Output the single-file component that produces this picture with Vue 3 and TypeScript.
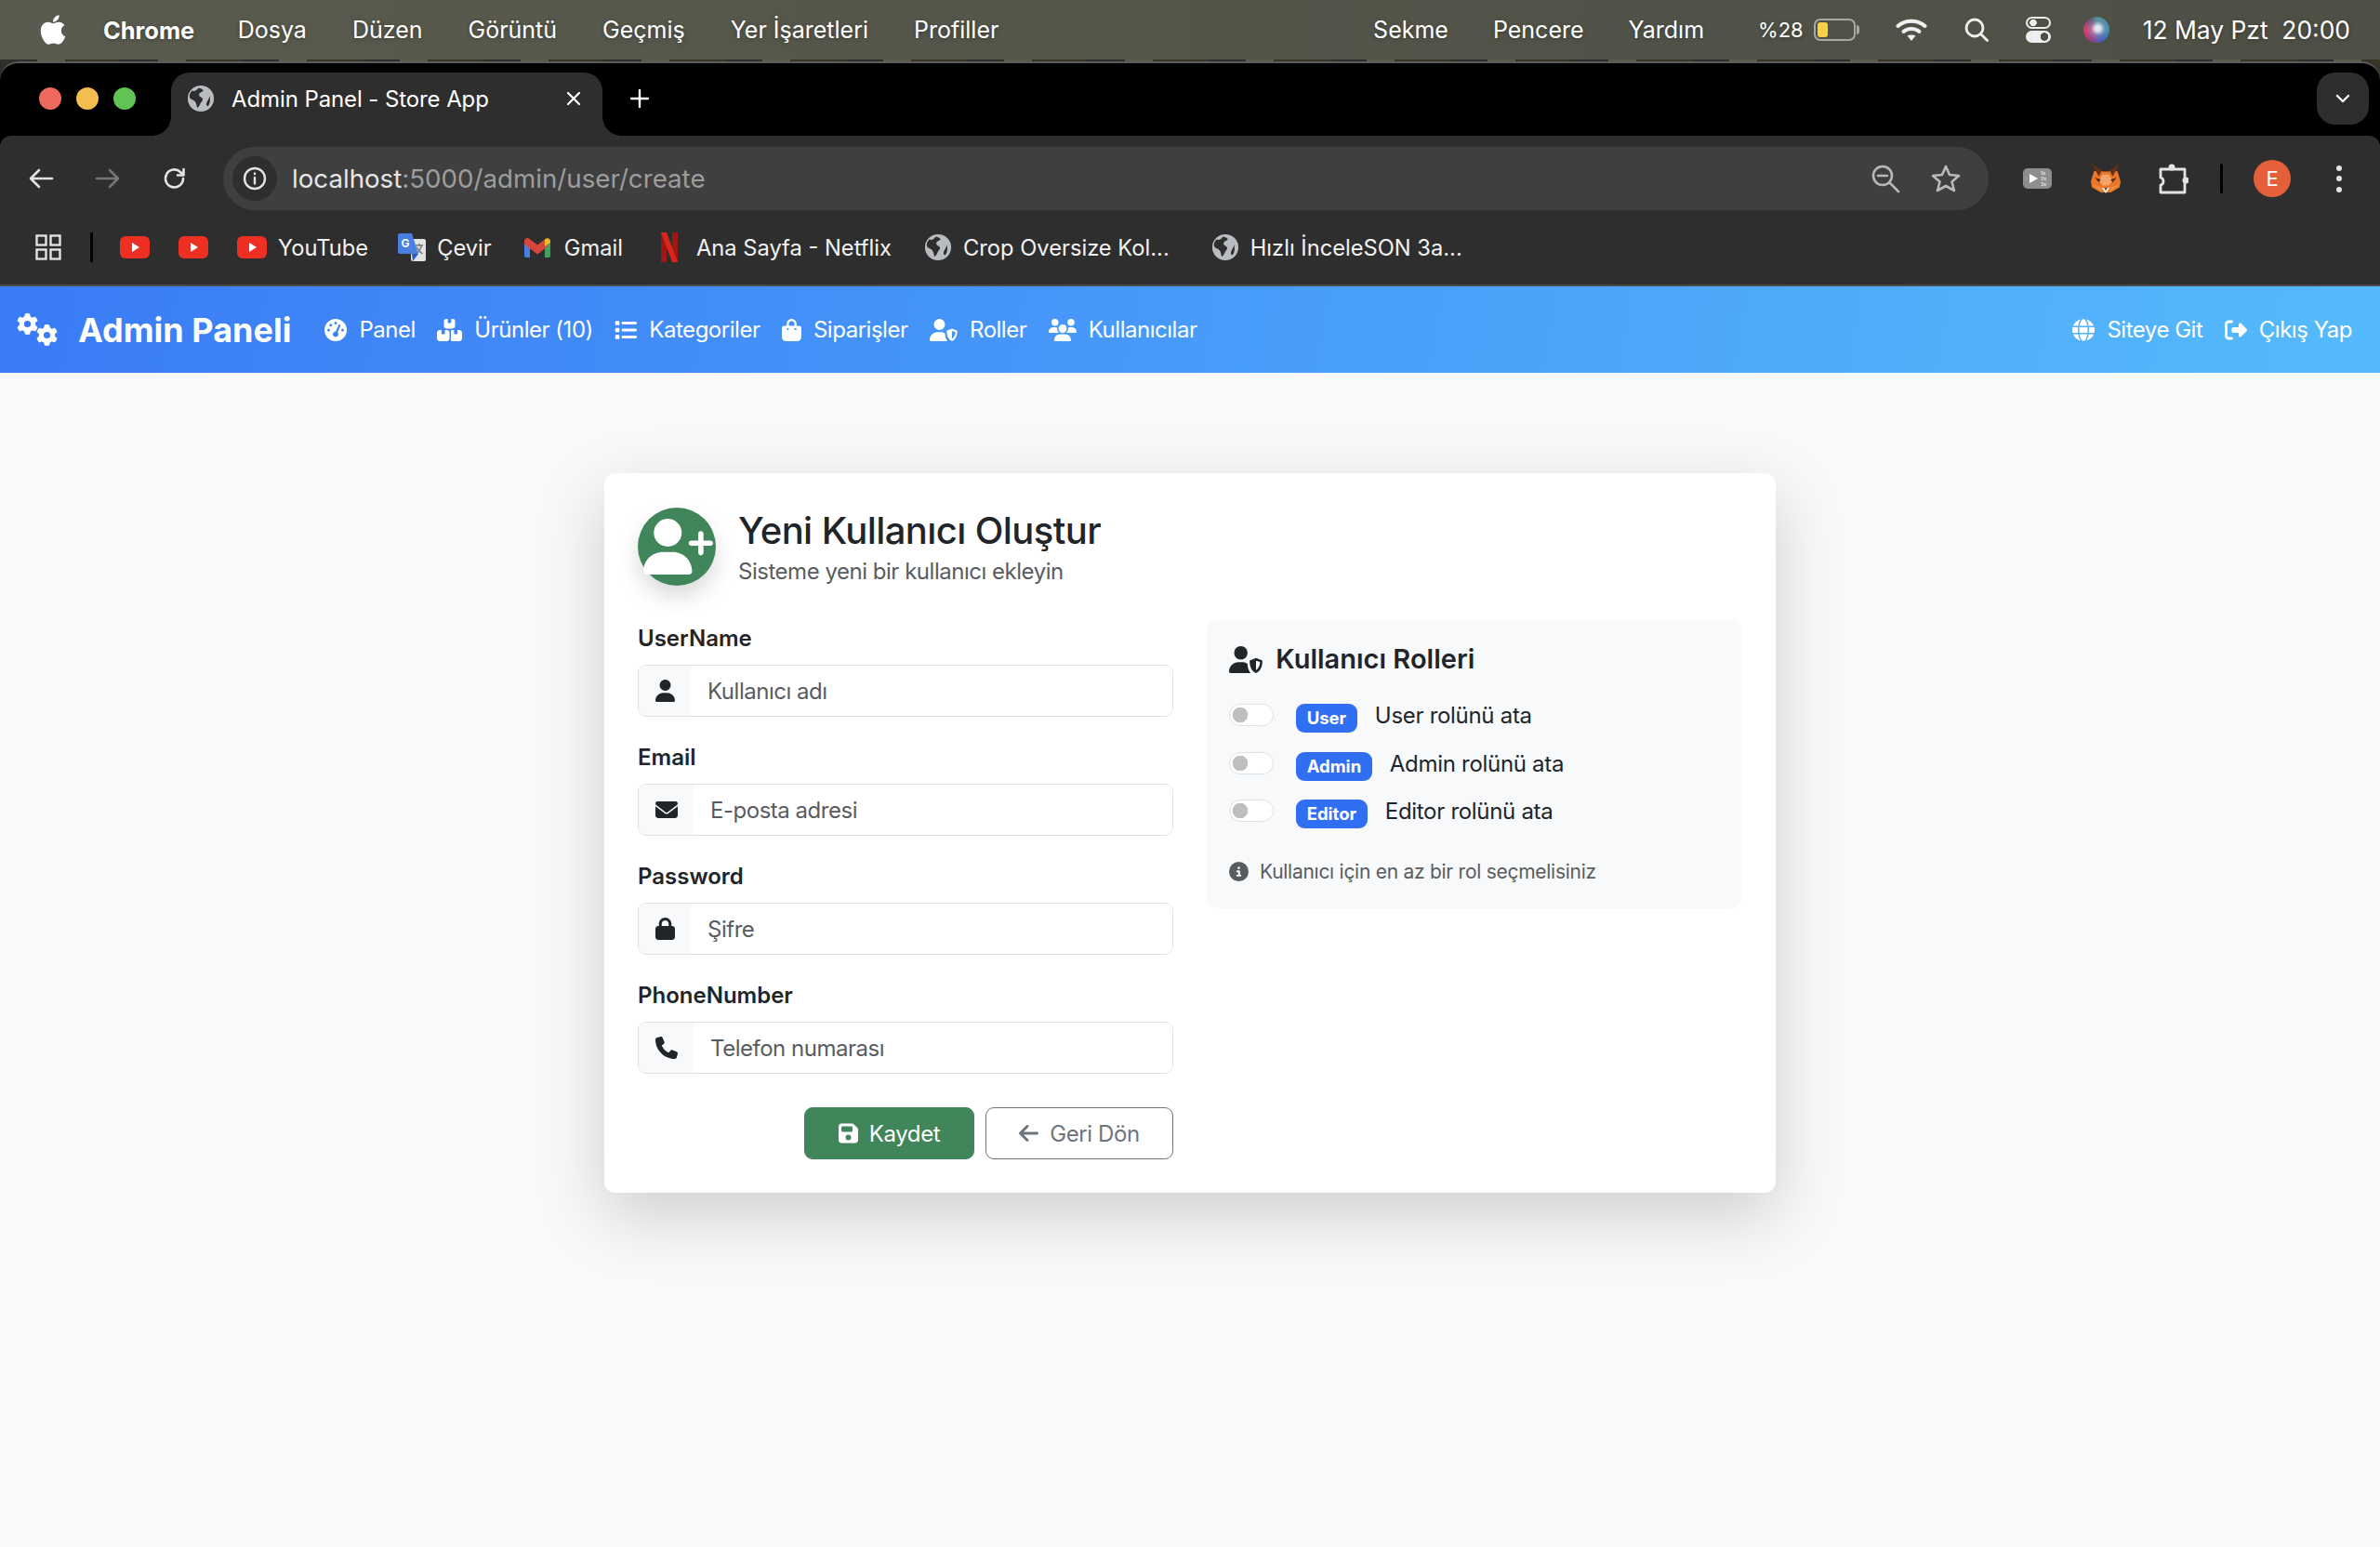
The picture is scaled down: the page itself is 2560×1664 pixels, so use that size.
<script setup lang="ts">
type Icon = { vb: string; d: string }

const icons: Record<string, Icon> = {
  gear: { vb: '0 0 512 512', d: 'M495.9 166.6c3.2 8.7 .5 18.4-6.4 24.6l-43.3 39.4c1.1 8.3 1.7 16.8 1.7 25.4s-.6 17.1-1.7 25.4l43.3 39.4c6.9 6.2 9.6 15.9 6.4 24.6c-4.4 11.9-9.7 23.3-15.8 34.3l-4.7 8.1c-6.6 11-14 21.4-22.1 31.2c-5.9 7.2-15.7 9.6-24.5 6.8l-55.7-17.7c-13.4 10.3-28.2 18.9-44 25.4l-12.5 57.1c-2 9.1-9 16.3-18.2 17.8c-13.8 2.3-28 3.5-42.5 3.5s-28.7-1.2-42.5-3.5c-9.2-1.5-16.2-8.7-18.2-17.8l-12.5-57.1c-15.8-6.5-30.6-15.1-44-25.4L83.1 425.9c-8.8 2.8-18.6 .3-24.5-6.8c-8.1-9.8-15.5-20.2-22.1-31.2l-4.7-8.1c-6.1-11-11.4-22.4-15.8-34.3c-3.2-8.7-.5-18.4 6.4-24.6l43.3-39.4C64.6 273.1 64 264.6 64 256s.6-17.1 1.7-25.4L22.4 191.2c-6.9-6.2-9.6-15.9-6.4-24.6c4.4-11.9 9.7-23.3 15.8-34.3l4.7-8.1c6.6-11 14-21.4 22.1-31.2c5.9-7.2 15.7-9.6 24.5-6.8l55.7 17.7c13.4-10.3 28.2-18.9 44-25.4l12.5-57.1c2-9.1 9-16.3 18.2-17.8C227.3 1.2 241.5 0 256 0s28.7 1.2 42.5 3.5c9.2 1.5 16.2 8.7 18.2 17.8l12.5 57.1c15.8 6.5 30.6 15.1 44 25.4l55.7-17.7c8.8-2.8 18.6-.3 24.5 6.8c8.1 9.8 15.5 20.2 22.1 31.2l4.7 8.1c6.1 11 11.4 22.4 15.8 34.3zM256 336a80 80 0 1 0 0-160 80 80 0 1 0 0 160z' },
  gauge: { vb: '0 0 512 512', d: 'M0 256a256 256 0 1 1 512 0A256 256 0 1 1 0 256zM288 96a32 32 0 1 0 -64 0 32 32 0 1 0 64 0zM256 416c35.3 0 64-28.7 64-64c0-17.4-6.9-33.1-18.1-44.6L366 161.7c5.3-12.1-.2-26.3-12.3-31.6s-26.3 .2-31.6 12.3L257.9 288c-.6 0-1.3 0-1.9 0c-35.3 0-64 28.7-64 64s28.7 64 64 64zM176 144a32 32 0 1 0 -64 0 32 32 0 1 0 64 0zM96 288a32 32 0 1 0 0-64 32 32 0 1 0 0 64zm352-32a32 32 0 1 0 -64 0 32 32 0 1 0 64 0z' },
  boxes: { vb: '0 0 576 512', d: 'M248 0H208c-26.5 0-48 21.5-48 48V160c0 35.3 28.7 64 64 64H352c35.3 0 64-28.7 64-64V48c0-26.5-21.5-48-48-48H328V80c0 8.8-7.2 16-16 16H264c-8.8 0-16-7.2-16-16V0zM64 256c-35.3 0-64 28.7-64 64V448c0 35.3 28.7 64 64 64H224c35.3 0 64-28.7 64-64V320c0-35.3-28.7-64-64-64H184v80c0 8.8-7.2 16-16 16H120c-8.8 0-16-7.2-16-16V256H64zM352 512H512c35.3 0 64-28.7 64-64V320c0-35.3-28.7-64-64-64H472v80c0 8.8-7.2 16-16 16H408c-8.8 0-16-7.2-16-16V256H352c-15 0-28.8 5.1-39.7 13.8c4.9 10.4 7.7 22 7.7 34.2V464c0 12.2-2.8 23.8-7.7 34.2C323.2 506.9 337 512 352 512z' },
  list: { vb: '0 0 512 512', d: 'M40 48C26.7 48 16 58.7 16 72v48c0 13.3 10.7 24 24 24H88c13.3 0 24-10.7 24-24V72c0-13.3-10.7-24-24-24H40zM192 64c-17.7 0-32 14.3-32 32s14.3 32 32 32H480c17.7 0 32-14.3 32-32s-14.3-32-32-32H192zm0 160c-17.7 0-32 14.3-32 32s14.3 32 32 32H480c17.7 0 32-14.3 32-32s-14.3-32-32-32H192zm0 160c-17.7 0-32 14.3-32 32s14.3 32 32 32H480c17.7 0 32-14.3 32-32s-14.3-32-32-32H192zM16 232v48c0 13.3 10.7 24 24 24H88c13.3 0 24-10.7 24-24V232c0-13.3-10.7-24-24-24H40c-13.3 0-24 10.7-24 24zM40 368c-13.3 0-24 10.7-24 24v48c0 13.3 10.7 24 24 24H88c13.3 0 24-10.7 24-24V392c0-13.3-10.7-24-24-24H40z' },
  bag: { vb: '0 0 448 512', d: 'M160 112c0-35.3 28.7-64 64-64s64 28.7 64 64v48H160V112zm-48 48H48c-26.5 0-48 21.5-48 48V416c0 53 43 96 96 96H352c53 0 96-43 96-96V208c0-26.5-21.5-48-48-48H336V112C336 50.1 285.9 0 224 0S112 50.1 112 112v48zm24 48a24 24 0 1 1 0 48 24 24 0 1 1 0-48zm152 24a24 24 0 1 1 48 0 24 24 0 1 1 -48 0z' },
  shield: { vb: '0 0 640 512', d: 'M224 256A128 128 0 1 0 224 0a128 128 0 1 0 0 256zm-45.7 48C79.8 304 0 383.8 0 482.3C0 498.7 13.3 512 29.7 512H408C370 460 352 400 352 338C328 318 300 304 269.7 304H178.3zM512 224L632 272C640 380 590 480 512 512C434 480 384 380 392 272zM512 276V458C562 428 590 360 590 300z' },
  users: { vb: '0 0 640 512', d: 'M144 0a80 80 0 1 1 0 160A80 80 0 1 1 144 0zM512 0a80 80 0 1 1 0 160A80 80 0 1 1 512 0zM0 298.7C0 239.8 47.8 192 106.7 192h42.7c15.9 0 31 3.5 44.6 9.7c-1.3 7.2-1.9 14.7-1.9 22.3c0 38.2 16.8 72.5 43.3 96c-.2 0-.4 0-.7 0H21.3C9.6 320 0 310.4 0 298.7zM405.3 320c-.2 0-.4 0-.7 0c26.6-23.5 43.3-57.8 43.3-96c0-7.6-.7-15-1.9-22.3c13.6-6.3 28.7-9.7 44.6-9.7h42.7C592.2 192 640 239.8 640 298.7c0 11.8-9.6 21.3-21.3 21.3H405.3zM224 224a96 96 0 1 1 192 0 96 96 0 1 1 -192 0zM128 485.3C128 411.7 187.7 352 261.3 352H378.7C452.3 352 512 411.7 512 485.3c0 14.7-11.9 26.7-26.7 26.7H154.7c-14.7 0-26.7-11.9-26.7-26.7z' },
  globe: { vb: '0 0 512 512', d: 'M352 256c0 22.2-1.2 43.6-3.3 64H163.3c-2.2-20.4-3.3-41.8-3.3-64s1.2-43.6 3.3-64H348.7c2.2 20.4 3.3 41.8 3.3 64zm28.8-64H503.9c5.3 20.5 8.1 41.9 8.1 64s-2.8 43.5-8.1 64H380.8c2.1-20.6 3.2-42 3.2-64s-1.1-43.4-3.2-64zm112.6-32H376.7c-10-63.9-29.8-117.4-55.3-151.6c78.3 20.7 142 77.5 171.9 151.6zm-149.1 0H167.7c6.1-36.4 15.5-68.6 27-94.7c10.5-23.6 22.2-40.7 33.5-51.5C239.4 3.2 248.7 0 256 0s16.6 3.2 27.8 13.8c11.3 10.8 23 27.9 33.5 51.5c11.6 26 20.9 58.2 27 94.7zm-209 0H18.6C48.6 85.9 112.2 29.1 190.6 8.4C165.1 42.6 145.3 96.1 135.3 160zM8.1 192H131.2c-2.1 20.6-3.2 42-3.2 64s1.1 43.4 3.2 64H8.1C2.8 299.5 0 278.1 0 256s2.8-43.5 8.1-64zM194.7 446.6c-11.6-26-20.9-58.2-27-94.6H344.3c-6.1 36.4-15.5 68.6-27 94.6c-10.5 23.6-22.2 40.7-33.5 51.5C272.6 508.8 263.3 512 256 512s-16.6-3.2-27.8-13.8c-11.3-10.8-23-27.9-33.5-51.5zM135.3 352c10 63.9 29.8 117.4 55.3 151.6C112.2 482.9 48.6 426.1 18.6 352H135.3zm358.1 0c-30 74.1-93.6 130.9-171.9 151.6c25.5-34.2 45.2-87.7 55.3-151.6H493.4z' },
  logout: { vb: '0 0 512 512', d: 'M377.9 105.9L500.7 228.7c7.2 7.2 11.3 17.1 11.3 27.3s-4.1 20.1-11.3 27.3L377.9 406.1c-6.4 6.4-15 9.9-24 9.9c-18.7 0-33.9-15.2-33.9-33.9l0-62.1-128 0c-17.7 0-32-14.3-32-32l0-64c0-17.7 14.3-32 32-32l128 0 0-62.1c0-18.7 15.2-33.9 33.9-33.9c9 0 17.6 3.6 24 9.9zM160 96L96 96c-17.7 0-32 14.3-32 32l0 256c0 17.7 14.3 32 32 32l64 0c17.7 0 32 14.3 32 32s-14.3 32-32 32l-64 0c-53 0-96-43-96-96L0 128C0 75 43 32 96 32l64 0c17.7 0 32 14.3 32 32s-14.3 32-32 32z' },
  userPlus: { vb: '0 0 640 512', d: 'M96 128a128 128 0 1 1 256 0A128 128 0 1 1 96 128zM0 482.3C0 383.8 79.8 304 178.3 304h91.4C368.2 304 448 383.8 448 482.3c0 16.4-13.3 29.7-29.7 29.7H29.7C13.3 512 0 498.7 0 482.3zM504 312V248H440c-13.3 0-24-10.7-24-24s10.7-24 24-24h64V136c0-13.3 10.7-24 24-24s24 10.7 24 24v64h64c13.3 0 24 10.7 24 24s-10.7 24-24 24H552v64c0 13.3-10.7 24-24 24s-24-10.7-24-24z' },
  user: { vb: '0 0 448 512', d: 'M224 256A128 128 0 1 0 224 0a128 128 0 1 0 0 256zm-45.7 48C79.8 304 0 383.8 0 482.3C0 498.7 13.3 512 29.7 512H418.3c16.4 0 29.7-13.3 29.7-29.7C448 383.8 368.2 304 269.7 304H178.3z' },
  envelope: { vb: '0 0 512 512', d: 'M48 64C21.5 64 0 85.5 0 112c0 15.1 7.1 29.3 19.2 38.4L236.8 313.6c11.4 8.5 27 8.5 38.4 0L492.8 150.4c12.1-9.1 19.2-23.3 19.2-38.4c0-26.5-21.5-48-48-48H48zM0 176V384c0 35.3 28.7 64 64 64H448c35.3 0 64-28.7 64-64V176L294.4 339.2c-22.8 17.1-54 17.1-76.8 0L0 176z' },
  lock: { vb: '0 0 448 512', d: 'M144 144v48H304V144c0-44.2-35.8-80-80-80s-80 35.8-80 80zM80 192V144C80 64.5 144.5 0 224 0s144 64.5 144 144v48h16c35.3 0 64 28.7 64 64V448c0 35.3-28.7 64-64 64H64c-35.3 0-64-28.7-64-64V256c0-35.3 28.7-64 64-64H80z' },
  phone: { vb: '0 0 512 512', d: 'M164.9 24.6c-7.7-18.6-28-28.5-47.4-23.2l-88 24C12.1 30.2 0 46 0 64C0 311.4 200.6 512 448 512c18 0 33.8-12.1 38.6-29.5l24-88c5.3-19.4-4.6-39.7-23.2-47.4l-96-40c-16.3-6.8-35.2-2.1-46.3 11.6L304.7 368C234.3 334.7 177.3 277.7 144 207.3L193.3 167c13.7-11.2 18.4-30 11.6-46.3l-40-96z' },
  save: { vb: '0 0 448 512', d: 'M64 32C28.7 32 0 60.7 0 96V416c0 35.3 28.7 64 64 64H384c35.3 0 64-28.7 64-64V173.3c0-17-6.7-33.3-18.7-45.3L352 50.7C340 38.7 323.7 32 306.7 32H64zm0 96c0-17.7 14.3-32 32-32H288c17.7 0 32 14.3 32 32v64c0 17.7-14.3 32-32 32H96c-17.7 0-32-14.3-32-32V128zM224 288a64 64 0 1 1 0 128 64 64 0 1 1 0-128z' },
  back: { vb: '0 0 448 512', d: 'M9.4 233.4c-12.5 12.5-12.5 32.8 0 45.3l160 160c12.5 12.5 32.8 12.5 45.3 0s12.5-32.8 0-45.3L109.2 288 416 288c17.7 0 32-14.3 32-32s-14.3-32-32-32l-306.7 0L214.6 118.6c12.5-12.5 12.5-32.8 0-45.3s-32.8-12.5-45.3 0l-160 160z' },
  info: { vb: '0 0 512 512', d: 'M256 512A256 256 0 1 0 256 0a256 256 0 1 0 0 512zM216 336h24V272H216c-13.3 0-24-10.7-24-24s10.7-24 24-24h48c13.3 0 24 10.7 24 24v88h8c13.3 0 24 10.7 24 24s-10.7 24-24 24H216c-13.3 0-24-10.7-24-24s10.7-24 24-24zm40-208a32 32 0 1 1 0 64 32 32 0 1 1 0-64z' },
  apple: { vb: '0 0 384 512', d: 'M318.7 268.7c-.2-36.7 16.4-64.4 50-84.8-18.8-26.9-47.2-41.7-84.7-44.6-35.5-2.8-74.3 20.7-88.5 20.7-15 0-49.4-19.7-76.4-19.7C63.3 141.2 4 184.8 4 273.5q0 39.3 14.4 81.2c12.8 36.7 59 126.7 107.2 125.2 25.2-.6 43-17.9 75.8-17.9 31.8 0 48.3 17.9 76.4 17.9 48.6-.7 90.4-82.5 102.6-119.3-65.2-30.7-61.7-90-61.7-91.9zm-56.6-164.2c27.3-32.4 24.8-61.9 24-72.5-24.1 1.4-52 16.4-67.9 34.9-17.5 19.8-27.8 44.3-25.6 71.9 26.1 2 49.9-11.4 69.5-34.3z' },
  favicon: { vb: '0 0 32 32', d: 'M16 1a15 15 0 1 0 0 30 15 15 0 0 0 0-30zM6 7c3 1 5 0 7-3 3 0 5 1 6 3-2 2-5 2-5 5 0 2 3 2 4 4s-2 4-3 7c-1 2-2 3-3 4-1-3-1-6-3-8s-5-2-6-5c0-3 1-5 3-7zm20 6c1 4 1 9-2 12-2-1-2-3-1-5s3-5 3-7z' }
}

const menuLeft = ['Dosya', 'Düzen', 'Görüntü', 'Geçmiş', 'Yer İşaretleri', 'Profiller']
const menuRight = ['Sekme', 'Pencere', 'Yardım']

const navLinks = [
  { icon: 'gauge', text: 'Panel' },
  { icon: 'boxes', text: 'Ürünler (10)' },
  { icon: 'list', text: 'Kategoriler' },
  { icon: 'bag', text: 'Siparişler' },
  { icon: 'shield', text: 'Roller' },
  { icon: 'users', text: 'Kullanıcılar' }
]

const navRight = [
  { icon: 'globe', text: 'Siteye Git' },
  { icon: 'logout', text: 'Çıkış Yap' }
]

const fields = [
  { label: 'UserName', placeholder: 'Kullanıcı adı', icon: 'user' },
  { label: 'Email', placeholder: 'E-posta adresi', icon: 'envelope' },
  { label: 'Password', placeholder: 'Şifre', icon: 'lock' },
  { label: 'PhoneNumber', placeholder: 'Telefon numarası', icon: 'phone' }
]

const roles = ['User', 'Admin', 'Editor']
</script>

<template>
  <div class="screen">
    <header class="menubar">
      <svg class="apple" :viewBox="icons.apple.vb"><path :d="icons.apple.d" /></svg>
      <strong class="menu-app">Chrome</strong>
      <span v-for="m in menuLeft" :key="m" class="menu-item">{{ m }}</span>
      <div class="menu-right">
        <span v-for="m in menuRight" :key="m" class="menu-item">{{ m }}</span>
        <span class="percent">%28</span>
        <span class="battery"><i></i></span>
        <svg class="wifi" viewBox="0 0 34 26" fill="none" stroke="#f0f0f0" stroke-width="4" stroke-linecap="round">
          <path d="M2.500 9C10 2 24 2 31.500 9" />
          <path d="M8.500 15C13 11 21 11 25.500 15" />
          <path d="M12.500 19.500C15 18 19 18 21.500 19.500L17 25z" fill="#f0f0f0" stroke="none" />
        </svg>
        <svg class="search" viewBox="0 0 26 26" fill="none" stroke="#f0f0f0" stroke-width="2.800" stroke-linecap="round">
          <circle cx="11" cy="11" r="9" />
          <path d="M17.500 17.500 24.500 24.500" />
        </svg>
        <span class="control"><i class="on"></i><i class="off"></i></span>
        <span class="siri"></span>
        <span class="clock">12 May Pzt&nbsp;&nbsp;20:00</span>
      </div>
    </header>

    <div class="window">
      <div class="tabstrip">
        <div class="lights"><i class="red"></i><i class="yellow"></i><i class="green"></i></div>
        <div class="tab">
          <svg class="favicon" :viewBox="icons.favicon.vb"><path :d="icons.favicon.d" fill-rule="evenodd" /></svg>
          <span class="tab-title">Admin Panel - Store App</span>
          <svg class="tab-close" viewBox="0 0 16 16" stroke="#fff" stroke-width="2.200" stroke-linecap="round"><path d="M2 2l12 12M14 2 2 14" /></svg>
        </div>
        <svg class="tab-plus" viewBox="0 0 20 20" stroke="#fff" stroke-width="2.400" stroke-linecap="round"><path d="M10 1v18M1 10h18" /></svg>
        <div class="tab-search">
          <svg viewBox="0 0 16 10" fill="none" stroke="#fff" stroke-width="2.400" stroke-linecap="round" stroke-linejoin="round"><path d="M2 2l6 6 6-6" /></svg>
        </div>
      </div>

      <div class="toolbar">
        <span class="tool"><svg class="t-ic" viewBox="0 0 28 24" fill="none" stroke="#e3e3e3" stroke-width="2.600" stroke-linecap="round" stroke-linejoin="round"><path d="M26 12H3M12 3l-9 9 9 9" /></svg></span>
        <span class="tool"><svg class="t-ic" viewBox="0 0 28 24" fill="none" stroke="#767676" stroke-width="2.600" stroke-linecap="round" stroke-linejoin="round"><path d="M2 12h23M16 3l9 9-9 9" /></svg></span>
        <span class="tool"><svg class="t-ic" viewBox="0 0 26 26" fill="none" stroke="#e3e3e3" stroke-width="2.600" stroke-linecap="round" stroke-linejoin="round"><path d="M22 13a9.500 9.500 0 1 1-3-7l3 3M22.500 3v6.500H16" /></svg></span>
        <div class="omnibox">
          <span class="site-info">
            <svg viewBox="0 0 26 26" fill="none" stroke="#e3e3e3" stroke-width="2.400" stroke-linecap="round"><circle cx="13" cy="13" r="11" /><path d="M13 12v6.500M13 7.500v.5" /></svg>
          </span>
          <span class="url"><b>localhost</b>:5000/admin/user/create</span>
          <svg class="omni-ic zoom-ic" viewBox="0 0 32 32" fill="none" stroke="#b9b9b9" stroke-width="2.600" stroke-linecap="round"><circle cx="13" cy="13" r="10" /><path d="M8 13h10M20.500 20.500 30 30" /></svg>
          <svg class="omni-ic" viewBox="0 0 32 32" fill="none" stroke="#b9b9b9" stroke-width="2.600" stroke-linejoin="round"><path d="M16 3l4 9 10 1-7.500 6.500L25 29l-9-5-9 5 2.500-9.500L2 13l10-1z" /></svg>
        </div>
        <span class="ext first">
          <svg class="speed-ic" viewBox="0 0 31 22">
            <rect width="31" height="22" rx="5" fill="#8e8e8e" />
            <path d="M7 6l9 5-9 5z" fill="#fff" />
            <text x="19" y="7" font-size="5" font-weight="700" fill="#e3e3e3" font-family="Inter, sans-serif">1x</text>
            <text x="19" y="13" font-size="5" font-weight="700" fill="#e3e3e3" font-family="Inter, sans-serif">2x</text>
            <text x="19" y="19" font-size="5" font-weight="700" fill="#e3e3e3" font-family="Inter, sans-serif">3x</text>
          </svg>
        </span>
        <span class="ext">
          <svg class="fox" viewBox="0 0 30 30">
            <path d="M3 8 8 6l4 2h6l4-2 5 2 3 10-1 6-9 5h-10l-9-5-1-6z" fill="#e8772a" />
            <path d="M1 0l10 7-3 6zM29 0 19 7l3 6z" fill="#6a2e10" />
            <path d="M12 11h6l4 6-4 5h-6l-4-5z" fill="#f6a56a" />
            <path d="M4 14l6 2-2 3zM26 14l-6 2 2 3z" fill="#5a2a12" />
            <path d="M1 21l10 3-1 4zM29 21l-10 3 1 4z" fill="#f28a3f" />
            <path d="M11 24.500h8L15 30z" fill="#f5efe8" />
            <path d="M13.500 24.500h3L15 27z" fill="#3a2416" />
          </svg>
        </span>
        <span class="ext">
          <svg class="puzzle" viewBox="0 0 32 33" fill="none" stroke="#e3e3e3" stroke-width="2.800" stroke-linejoin="round">
            <path d="M2 6H28V31H2V23C6 22 6 16 2 15z" />
            <circle cx="14" cy="4" r="3.500" fill="#e3e3e3" stroke="none" />
            <circle cx="29" cy="18" r="3.500" fill="#e3e3e3" stroke="none" />
          </svg>
        </span>
        <span class="tool-sep"></span>
        <span class="avatar-cell"><span class="avatar">E</span></span>
        <span class="dots"><i></i><i></i><i></i></span>
      </div>

      <div class="bookmarks">
        <svg class="apps" viewBox="0 0 28 28" fill="none" stroke="#e3e3e3" stroke-width="2.400"><rect x="1.500" y="1.500" width="10" height="10" /><rect x="16.500" y="1.500" width="10" height="10" /><rect x="1.500" y="16.500" width="10" height="10" /><rect x="16.500" y="16.500" width="10" height="10" /></svg>
        <span class="bm-sep"></span>
        <svg class="yt" viewBox="0 0 32 24"><rect width="32" height="24" rx="6" fill="#ee3024" /><path d="M13 7l8 5-8 5z" fill="#fff" /></svg>
        <svg class="yt" viewBox="0 0 32 24"><rect width="32" height="24" rx="6" fill="#ee3024" /><path d="M13 7l8 5-8 5z" fill="#fff" /></svg>
        <span class="bm bm-yt">
          <svg class="yt" viewBox="0 0 32 24"><rect width="32" height="24" rx="6" fill="#ee3024" /><path d="M13 7l8 5-8 5z" fill="#fff" /></svg>
          YouTube
        </span>
        <span class="bm">
          <svg class="bm-ic" viewBox="0 0 30 30">
            <rect x="14" y="6" width="16" height="24" rx="2" fill="#e3e3e3" />
            <path d="M19 13h8M23 11v2M25.500 13c-1 4-3 7-6 9M20.500 15c1 3 3 5 6 7" stroke="#777" stroke-width="1.300" fill="none" />
            <path d="M15 22h7l-6 8z" fill="#2f5cb8" />
            <path d="M2 0H15l7 22H2a2 2 0 0 1-2-2V2a2 2 0 0 1 2-2z" fill="#4a7fe0" />
            <text x="3.500" y="15" font-size="12" font-weight="700" fill="#fff" font-family="Inter, sans-serif">G</text>
          </svg>
          Çevir
        </span>
        <span class="bm bm-gmail">
          <svg class="gmail" viewBox="0 0 28 21">
            <path d="M0 5v14a2 2 0 0 0 2 2h4V8z" fill="#4a7fe0" />
            <path d="M22 8v13h4a2 2 0 0 0 2-2V5z" fill="#3fa45b" />
            <path d="M0 3.500C0 .5 3 -1 5.500 1L14 7.500 22.500 1 25 4v5l-11 8.500L3 9 0 6z" fill="#d9453a" />
            <path d="M22 9V1.500C24.500 -1 28 .5 28 3.500V5z" fill="#efb82f" />
          </svg>
          Gmail
        </span>
        <span class="bm">
          <svg class="netflix" viewBox="0 0 18 32">
            <path d="M0 0h6v32H0zM12 0h6v32h-6z" fill="#9f1712" />
            <path d="M0 0h6l12 32h-6z" fill="#d8261c" />
          </svg>
          Ana Sayfa - Netflix
        </span>
        <span class="bm wide">
          <svg class="favicon" :viewBox="icons.favicon.vb"><path :d="icons.favicon.d" fill-rule="evenodd" /></svg>
          Crop Oversize Kol...
        </span>
        <span class="bm">
          <svg class="favicon" :viewBox="icons.favicon.vb"><path :d="icons.favicon.d" fill-rule="evenodd" /></svg>
          Hızlı İnceleSON 3a...
        </span>
      </div>

      <nav class="navbar">
        <svg class="brand-ic" viewBox="0 0 44 35">
          <svg x="0" y="0" width="23" height="23" :viewBox="icons.gear.vb"><path :d="icons.gear.d" /></svg>
          <svg x="21" y="12" width="23" height="23" :viewBox="icons.gear.vb"><path :d="icons.gear.d" /></svg>
        </svg>
        <span class="brand">Admin Paneli</span>
        <a v-for="l in navLinks" :key="l.text" class="nav-link">
          <svg class="nav-ic" :viewBox="icons[l.icon].vb"><path :d="icons[l.icon].d" fill-rule="evenodd" /></svg>
          {{ l.text }}
        </a>
        <div class="nav-right">
          <a v-for="l in navRight" :key="l.text" class="nav-link">
            <svg class="nav-ic" :viewBox="icons[l.icon].vb"><path :d="icons[l.icon].d" /></svg>
            {{ l.text }}
          </a>
        </div>
      </nav>

      <main class="page">
        <section class="card">
          <div class="card-head">
            <span class="head-avatar">
              <svg :viewBox="icons.userPlus.vb"><path :d="icons.userPlus.d" /></svg>
            </span>
            <div>
              <h1>Yeni Kullanıcı Oluştur</h1>
              <p>Sisteme yeni bir kullanıcı ekleyin</p>
            </div>
          </div>

          <div class="card-grid">
            <form class="fields" @submit.prevent>
              <div v-for="f in fields" :key="f.label" class="field">
                <label>{{ f.label }}</label>
                <div class="input-group">
                  <span class="addon">
                    <svg :viewBox="icons[f.icon].vb"><path :d="icons[f.icon].d" /></svg>
                  </span>
                  <input type="text" :placeholder="f.placeholder" />
                </div>
              </div>
              <div class="actions">
                <button type="submit" class="btn save">
                  <svg :viewBox="icons.save.vb"><path :d="icons.save.d" /></svg>
                  Kaydet
                </button>
                <button type="button" class="btn return">
                  <svg :viewBox="icons.back.vb"><path :d="icons.back.d" /></svg>
                  Geri Dön
                </button>
              </div>
            </form>

            <aside class="roles">
              <h2>
                <svg :viewBox="icons.shield.vb"><path :d="icons.shield.d" fill-rule="evenodd" /></svg>
                Kullanıcı Rolleri
              </h2>
              <div v-for="r in roles" :key="r" class="role">
                <input type="checkbox" class="switch" />
                <span class="badge">{{ r }}</span>
                <span>{{ r }} rolünü ata</span>
              </div>
              <p class="note">
                <svg :viewBox="icons.info.vb"><path :d="icons.info.d" /></svg>
                Kullanıcı için en az bir rol seçmelisiniz
              </p>
            </aside>
          </div>
        </section>
      </main>
    </div>
  </div>
</template>

<style>
html,
body {
  margin: 0;
  background: #f8f9fa;
}
</style>

<style scoped>
.screen {
  width: 2560px;
  height: 1664px;
  overflow: hidden;
  display: flex;
  flex-direction: column;
  background: repeating-linear-gradient(90deg, #2c2f2a 0 40px, #5b5a4c 40px 70px, #3a3328 70px 130px);
  font-family: Inter, "Noto Sans", sans-serif;
  color: #212529;
}

/* mac menu bar */
.menubar {
  height: 64px;
  flex: none;
  display: flex;
  align-items: center;
  gap: 49px;
  padding: 0 32px 0 43px;
  background: linear-gradient(90deg, #5a5b4e, #4e4f45);
  color: #fff;
  font-size: 25px;
  text-shadow: 0 1px 4px rgba(0, 0, 0, .35);
}
.apple {
  width: 28px;
  height: 36px;
  fill: #fff;
  margin-right: -9px;
}
.menu-app {
  font-weight: 700;
  font-size: 25.400px;
  margin-right: -2.500px;
}
.menu-right {
  margin-left: auto;
  display: flex;
  align-items: center;
  gap: 48px;
}
.percent {
  font-size: 22px;
  margin-left: 10px;
  margin-right: -37px;
}
.battery {
  position: relative;
  width: 45px;
  height: 24px;
  margin-right: -5px;
  box-sizing: border-box;
  border: 2px solid #a9a9a2;
  border-radius: 7px;
  padding: 2px;
}
.battery::after {
  content: "";
  position: absolute;
  right: -6px;
  top: 5px;
  width: 3px;
  height: 10px;
  border-radius: 0 3px 3px 0;
  background: #a9a9a2;
}
.battery i {
  display: block;
  width: 11px;
  height: 100%;
  background: #f7d046;
  border-radius: 3px;
}
.wifi {
  width: 34px;
  height: 26px;
  margin-right: -8px;
}
.search {
  width: 26px;
  height: 26px;
  margin-right: -8px;
}
.control {
  display: flex;
  flex-direction: column;
  gap: 2px;
  margin-right: -13px;
}
.control i {
  display: block;
  box-sizing: border-box;
  width: 27px;
  height: 13px;
  border-radius: 7px;
}
.control .on {
  border: 2px solid #eee;
  background: radial-gradient(circle at 6px 4.500px, #eee 3.500px, transparent 4px);
}
.control .off {
  background: radial-gradient(circle at 20px 6.500px, #4e4f45 4px, #eee 4.500px);
}
.siri {
  width: 28px;
  height: 28px;
  margin-right: -12px;
  border-radius: 50%;
  background:
    radial-gradient(circle at 55% 45%, rgba(235, 235, 245, .95) 0 12%, rgba(150, 150, 190, .5) 35%, transparent 62%),
    conic-gradient(#3a8f88, #2f8fa8 90deg, #3c60c0 150deg, #a03a80 210deg, #d83a70 270deg, #6a4a70 330deg, #3a8f88);
}
.clock {
  font-size: 26.400px;
}

/* browser frame */
.window {
  flex: 1;
  margin-top: 2px;
  min-height: 0;
  display: flex;
  flex-direction: column;
  background: #000;
  border-radius: 20px 20px 0 0;
  border-top: 2px solid #5c5c5c;
  overflow: hidden;
}
.tabstrip {
  height: 78px;
  flex: none;
  display: flex;
  align-items: flex-end;
  padding-left: 42px;
  box-sizing: border-box;
}
.lights {
  align-self: flex-start;
  margin-top: 26px;
  display: flex;
  gap: 16px;
  margin-right: 38px;
}
.lights i {
  width: 24px;
  height: 24px;
  border-radius: 50%;
}
.red { background: #ee6a5f; }
.yellow { background: #f5bd4f; }
.green { background: #61c354; }
.tab {
  position: relative;
  width: 464px;
  height: 68px;
  box-sizing: border-box;
  padding: 0 23px 12px 17px;
  display: flex;
  align-items: center;
  gap: 18px;
  color: #fff;
  font-size: 24px;
  letter-spacing: -.1px;
  background: #2e2e2e;
  border-radius: 20px 20px 0 0;
}
.tab::before,
.tab::after {
  content: "";
  position: absolute;
  bottom: 0;
  width: 20px;
  height: 20px;
}
.tab::before {
  left: -20px;
  background: radial-gradient(circle at 0 0, transparent 19.500px, #2e2e2e 20px);
}
.tab::after {
  right: -20px;
  background: radial-gradient(circle at 100% 0, transparent 19.500px, #2e2e2e 20px);
}
.tab-title {
  flex: 1;
}
.tab-close {
  width: 16px;
  height: 16px;
}
.favicon {
  width: 30px;
  height: 30px;
  flex: none;
  fill: #b9bcc1;
}
.tab-plus {
  width: 20px;
  height: 20px;
  margin-left: 30px;
  margin-bottom: 30px;
}
.tab-search {
  margin-left: auto;
  margin-right: 12px;
  margin-bottom: 12px;
  width: 56px;
  height: 56px;
  border-radius: 20px;
  background: #2e2e2e;
  display: flex;
  align-items: center;
  justify-content: center;
}
.tab-search svg {
  width: 16px;
  height: 10px;
}

/* toolbar */
.toolbar {
  height: 80px;
  flex: none;
  display: flex;
  align-items: center;
  padding: 12px 12px 0 8px;
  box-sizing: border-box;
  background: #2e2e2e;
  border-radius: 12px 12px 0 0;
}
.tool {
  width: 72px;
  display: flex;
  justify-content: center;
}
.t-ic {
  width: 28px;
  height: 26px;
}
.omnibox {
  flex: 1;
  height: 68px;
  margin-left: 16px;
  display: flex;
  align-items: center;
  border-radius: 34px;
  background: #3f3f3f;
  padding: 0 30px 0 10px;
}
.site-info {
  width: 48px;
  height: 48px;
  border-radius: 50%;
  background: #2e2e2e;
  display: flex;
  align-items: center;
  justify-content: center;
}
.site-info svg {
  width: 26px;
  height: 26px;
}
.url {
  flex: 1;
  margin-left: 16px;
  font-size: 27.700px;
  color: #9d9d9d;
}
.url b {
  font-weight: 400;
  color: #e6e6e6;
}
.omni-ic {
  width: 32px;
  height: 32px;
}
.zoom-ic {
  margin-right: 33px;
}
.ext {
  width: 73px;
  display: flex;
  justify-content: center;
}
.ext.first {
  margin-left: 16px;
}
.speed-ic {
  width: 31px;
  height: 22px;
}
.fox {
  width: 32px;
  height: 32px;
}
.puzzle {
  width: 32px;
  height: 33px;
}
.tool-sep {
  width: 3px;
  height: 32px;
  margin: 0 13.500px;
  border-radius: 2px;
  background: #000;
}
.avatar-cell {
  width: 80px;
  display: flex;
  justify-content: center;
}
.avatar {
  width: 40px;
  height: 40px;
  border-radius: 50%;
  background: #e5603a;
  color: #fff;
  font-size: 22px;
  display: flex;
  align-items: center;
  justify-content: center;
}
.dots {
  width: 64px;
  display: flex;
  flex-direction: column;
  align-items: center;
  gap: 5.500px;
}
.dots i {
  width: 6px;
  height: 6px;
  border-radius: 50%;
  background: #e3e3e3;
}

/* bookmarks bar */
.bookmarks {
  height: 82px;
  flex: none;
  box-sizing: border-box;
  display: flex;
  align-items: center;
  padding: 0 0 0 38px;
  background: #2e2e2e;
  border-bottom: 2px solid #4a4a4a;
  color: #f2f2f2;
  font-size: 23.700px;
}
.apps {
  width: 28px;
  height: 28px;
}
.bm-sep {
  width: 3px;
  height: 32px;
  margin: 0 29px 0 31px;
  background: #000;
}
.yt {
  width: 32px;
  height: 24px;
  flex: none;
  margin-right: 31px;
}
.bm .yt {
  margin-right: 0;
}
.bm {
  display: flex;
  align-items: center;
  gap: 12px;
  margin-right: 35px;
  white-space: nowrap;
}
.bm-yt {
  margin-right: 32px;
}
.bm-gmail {
  gap: 15px;
  margin-right: 41px;
}
.bm-ic {
  width: 30px;
  height: 30px;
}
.gmail {
  width: 28px;
  height: 21px;
}
.netflix {
  width: 18px;
  height: 32px;
  margin-right: 8px;
}
.bm.wide {
  margin-right: 45px;
}

/* admin navbar */
.navbar {
  height: 93px;
  flex: none;
  box-sizing: border-box;
  display: flex;
  align-items: center;
  padding: 0 30px 0 18px;
  background: linear-gradient(100deg, #3a7bf6, #55bafc);
  color: #fff;
  font-size: 24px;
  letter-spacing: -.48px;
}
.brand-ic {
  width: 44px;
  height: 35px;
  fill: #fff;
}
.brand {
  font-size: 36px;
  font-weight: 700;
  letter-spacing: 0;
  margin: 0 36px 0 22px;
  white-space: nowrap;
}
.nav-link {
  display: flex;
  align-items: center;
  gap: 13px;
  margin-right: 23.500px;
  white-space: nowrap;
}
.nav-ic {
  height: 24px;
  width: auto;
  fill: #fff;
}
.nav-right {
  margin-left: auto;
  display: flex;
}
.nav-right .nav-link:last-child {
  margin-right: 0;
}

/* page */
.page {
  flex: 1;
  background: #f8f9fa;
  padding-top: 108px;
}
.card {
  width: 1260px;
  margin: 0 auto;
  box-sizing: border-box;
  padding: 37px 36px 36px;
  background: #fff;
  border-radius: 12px;
  box-shadow: 0 24px 72px rgba(0, 0, 0, .175);
}
.card-head {
  height: 84px;
  display: flex;
  align-items: center;
  gap: 24px;
  margin-bottom: 37px;
}
.head-avatar {
  width: 84px;
  height: 84px;
  flex: none;
  border-radius: 50%;
  background: #40865a;
  box-shadow: 0 12px 24px rgba(0, 0, 0, .15);
  display: flex;
  align-items: center;
  justify-content: center;
}
.head-avatar svg {
  width: 75px;
  height: 60px;
  fill: #fff;
  margin-left: 2px;
}
h1 {
  margin: 0;
  font-size: 40px;
  font-weight: 500;
  line-height: 48px;
  letter-spacing: -.6px;
}
.card-head p {
  margin: 5px 0 0;
  font-size: 24px;
  line-height: 30px;
  letter-spacing: -.48px;
  color: #595c5f;
}
.card-grid {
  display: grid;
  grid-template-columns: 576px 576px;
  gap: 36px;
  align-items: start;
}
.field {
  margin-bottom: 24px;
}
label {
  display: block;
  font-size: 24px;
  font-weight: 600;
  line-height: 36px;
  padding-top: 2px;
  margin-bottom: 10px;
}
.input-group {
  height: 56px;
  display: flex;
  box-sizing: border-box;
  border: 1px solid #dee2e6;
  border-radius: 9px;
  overflow: hidden;
}
.addon {
  display: flex;
  align-items: center;
  padding: 0 17px 0 18px;
  background: #f8f9fa;
}
.addon svg {
  height: 24px;
  width: auto;
  fill: #212529;
}
input[type="text"] {
  flex: 1;
  min-width: 0;
  border: 0;
  outline: 0;
  padding: 0 18px;
  font: inherit;
  font-size: 24px;
  letter-spacing: -.48px;
  color: #212529;
  background: #fff;
}
input[type="text"]::placeholder {
  color: #595c5f;
  opacity: 1;
}
.actions {
  display: flex;
  justify-content: flex-end;
  gap: 12px;
  margin-top: 36px;
}
.btn {
  height: 56px;
  display: flex;
  align-items: center;
  justify-content: center;
  gap: 12px;
  box-sizing: border-box;
  border-radius: 9px;
  font: inherit;
  font-size: 24px;
  letter-spacing: -.4px;
}
.btn svg {
  height: 24px;
  width: auto;
  fill: currentColor;
}
.save {
  width: 183px;
  border: 1px solid #40865a;
  background: #40865a;
  color: #fff;
}
.return {
  width: 202px;
  border: 1px solid #6c757d;
  background: #fff;
  color: #6c757d;
}
.roles {
  height: 310px;
  box-sizing: border-box;
  padding: 24px;
  background: #f8f9fa;
  border-radius: 12px;
}
h2 {
  display: flex;
  align-items: center;
  gap: 14px;
  margin: 0 0 25px;
  font-size: 29px;
  font-weight: 600;
  line-height: 36px;
}
h2 svg {
  height: 29px;
  width: auto;
  fill: #212529;
}
.role {
  height: 36px;
  display: flex;
  align-items: flex-start;
  font-size: 24px;
  line-height: 36px;
  letter-spacing: -.3px;
  margin-bottom: 15.500px;
}
.switch {
  appearance: none;
  width: 48px;
  height: 24px;
  margin: 5px 24px 0 0;
  flex: none;
  border: 1px solid #dee2e6;
  border-radius: 12px;
  background: #fff radial-gradient(circle at 11px 11px, #bfbfbf 8px, transparent 8.500px);
  box-sizing: border-box;
}
.badge {
  margin: 5px 19px 0 0;
  height: 31px;
  display: flex;
  align-items: center;
  padding: 0 11.700px;
  font-size: 18.500px;
  font-weight: 700;
  line-height: 1;
  letter-spacing: 0;
  color: #fff;
  background: #316ff2;
  border-radius: 9px;
}
.note {
  display: flex;
  align-items: center;
  gap: 12px;
  margin: 30px 0 0;
  height: 32px;
  font-size: 21px;
  letter-spacing: -.27px;
  color: #595c5f;
}
.note svg {
  width: 21px;
  height: 21px;
  fill: #595c5f;
}
</style>
